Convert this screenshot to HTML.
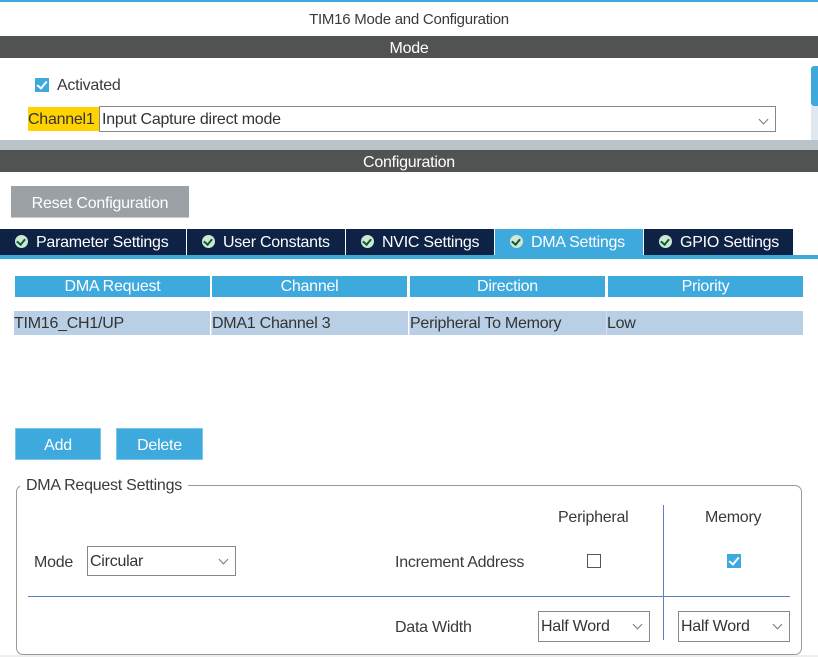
<!DOCTYPE html>
<html><head><meta charset="utf-8"><style>
*{box-sizing:border-box;margin:0;padding:0}
body{width:818px;height:657px;overflow:hidden;background:#fff;font-family:"Liberation Sans",sans-serif;font-size:16px;color:#3a3a3a;position:relative;letter-spacing:-0.25px}
.a{position:absolute;white-space:nowrap}
.bar{position:absolute;left:0;width:818px;background:#505351;color:#fff;text-align:center}
.tab{position:absolute;top:229px;height:26px;background:#0d2244;color:#fff;line-height:27px;padding-left:15px}
.tab i{display:inline-block;width:13px;height:13px;border-radius:50%;background:#cfe8d6;vertical-align:-1px;margin-right:8px;position:relative}
.tab i:after{content:"";position:absolute;left:3px;top:2px;width:4px;height:6px;border:solid #0d5c2a;border-width:0 2px 2px 0;transform:rotate(40deg)}
.th{position:absolute;top:276px;height:21px;background:#3ea9dd;color:#fff;text-align:center;line-height:22px}
.td{position:absolute;top:311px;height:24px;background:#b8cfe6;line-height:26px;color:#333}
.btn{position:absolute;background:#3ea9dd;color:#fff;text-align:center;border:1px solid #7cc6ea}
.sel{position:absolute;border:1px solid #888;background:#fff;line-height:30px;padding-left:2px;color:#333}
.sel:after{content:"";position:absolute;right:8px;top:9px;width:6px;height:6px;border:solid #777;border-width:0 1px 1px 0;transform:rotate(45deg)}
.cb{position:absolute;width:14px;height:14px;background:#3ea9dd}
.cb:after{content:"";position:absolute;left:4px;top:1px;width:4px;height:8px;border:solid #fff;border-width:0 2px 2px 0;transform:rotate(40deg)}
</style></head><body>
<div class="a" style="left:0;top:0;width:818px;height:2px;background:#3ea9dd"></div>
<div class="a" style="left:0;top:11px;width:818px;text-align:center;font-size:15px">TIM16 Mode and Configuration</div>
<div class="bar" style="top:36px;height:22px;line-height:25px">Mode</div>
<div class="a" style="left:811px;top:66px;width:7px;height:40px;background:#3ea9dd;border-radius:3px 0 0 3px"></div>
<div class="a" style="left:811px;top:106px;width:7px;height:34px;background:#dde8f0"></div>
<div class="cb" style="left:35px;top:78px"></div>
<div class="a" style="left:57px;top:77px">Activated</div>
<div class="a" style="left:28px;top:107px;width:71px;height:24px;background:#ffd200;line-height:26px;color:#333">Channel1</div>
<div class="sel" style="left:99px;top:106px;width:677px;height:26px;line-height:26px">Input Capture direct mode</div>
<div class="a" style="left:0;top:140px;width:818px;height:10px;background:#b9c3c9"></div>
<div class="bar" style="top:150px;height:22px;line-height:25px">Configuration</div>
<div class="a" style="left:11px;top:186px;width:178px;height:32px;background:#9aa0a4;color:#fff;text-align:center;line-height:35px;border-bottom:1px solid #ccc">Reset Configuration</div>
<div class="tab" style="left:0;width:186px"><i></i>Parameter Settings</div>
<div class="tab" style="left:187px;width:158px"><i></i>User Constants</div>
<div class="tab" style="left:346px;width:148px"><i></i>NVIC Settings</div>
<div class="tab" style="left:495px;width:148px;background:#3ea9dd"><i></i>DMA Settings</div>
<div class="tab" style="left:644px;width:149px"><i></i>GPIO Settings</div>
<div class="a" style="left:0;top:255px;width:818px;height:4px;background:#3ea9dd"></div>
<div class="th" style="left:15px;width:195px">DMA Request</div>
<div class="th" style="left:212px;width:195px">Channel</div>
<div class="th" style="left:410px;width:195px">Direction</div>
<div class="th" style="left:608px;width:195px">Priority</div>
<div class="td" style="left:14px;width:196px">TIM16_CH1/UP</div>
<div class="td" style="left:211px;width:197px;border-left:1px solid #dde">DMA1 Channel 3</div>
<div class="td" style="left:409px;width:197px;border-left:1px solid #dde">Peripheral To Memory</div>
<div class="td" style="left:606px;width:197px;border-left:1px solid #dde">Low</div>
<div class="btn" style="left:15px;top:428px;width:86px;height:32px;line-height:33px">Add</div>
<div class="btn" style="left:116px;top:428px;width:87px;height:32px;line-height:33px">Delete</div>
<div class="a" style="left:16px;top:485px;width:786px;height:170px;border:1px solid #999;border-radius:7px"></div>
<div class="a" style="left:20px;top:477px;padding:0 6px;background:#fff">DMA Request Settings</div>
<div class="a" style="left:558px;top:509px">Peripheral</div>
<div class="a" style="left:705px;top:509px">Memory</div>
<div class="a" style="left:663px;top:505px;width:1px;height:135px;background:#5b7fc0"></div>
<div class="a" style="left:34px;top:554px">Mode</div>
<div class="sel" style="left:87px;top:546px;width:149px;height:30px">Circular</div>
<div class="a" style="left:395px;top:554px">Increment Address</div>
<div class="a" style="left:587px;top:554px;width:14px;height:14px;border:1px solid #555"></div>
<div class="cb" style="left:727px;top:554px"></div>
<div class="a" style="left:28px;top:596px;width:762px;height:1px;background:#5b7fc0"></div>
<div class="a" style="left:395px;top:619px">Data Width</div>
<div class="sel" style="left:538px;top:611px;width:112px;height:31px">Half Word</div>
<div class="sel" style="left:678px;top:611px;width:112px;height:31px">Half Word</div>
<div class="a" style="left:0;top:655px;width:818px;height:2px;background:#eee"></div>
</body></html>
